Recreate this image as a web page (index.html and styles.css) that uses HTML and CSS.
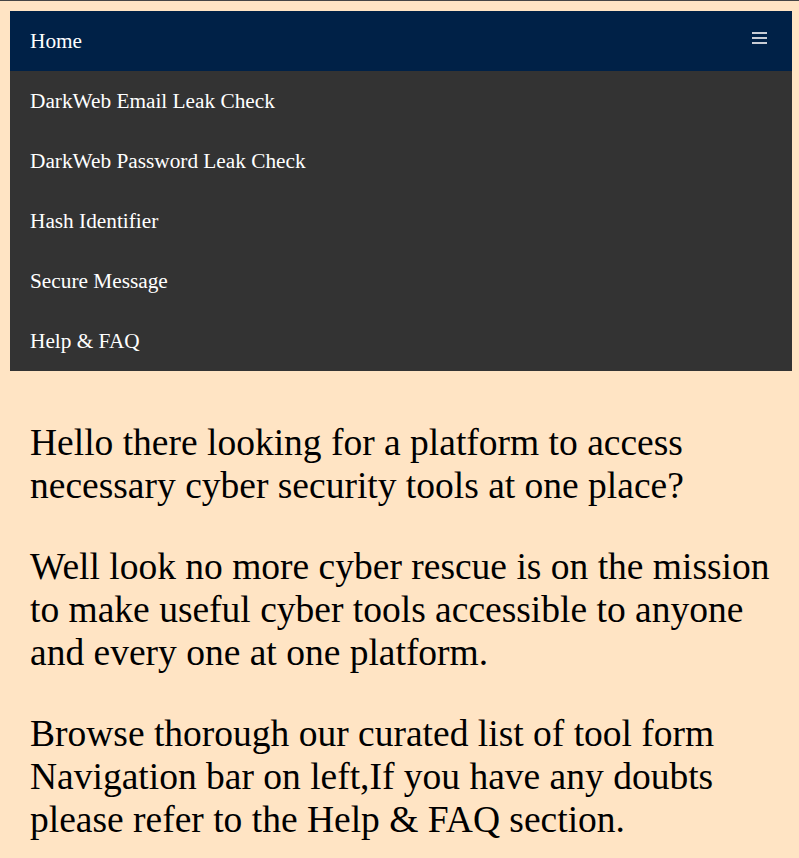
FILE: index.html
```html
<!DOCTYPE html>
<html lang="en">
<head>
<meta charset="utf-8">
<title>Cyber Rescue</title>
<link rel="stylesheet" href="styles.css">
</head>
<body>
<nav class="nav">
  <div class="nav-top">
    <a class="nav-link" href="#">Home</a>
    <span class="menu-icon" aria-hidden="true"><span></span><span></span><span></span></span>
  </div>
  <a class="nav-link nav-item" href="#">DarkWeb Email Leak Check</a>
  <a class="nav-link nav-item" href="#">DarkWeb Password Leak Check</a>
  <a class="nav-link nav-item" href="#">Hash Identifier</a>
  <a class="nav-link nav-item" href="#">Secure Message</a>
  <a class="nav-link nav-item" href="#">Help &amp; FAQ</a>
</nav>
<main class="content">
  <p>Hello there looking for a platform to access necessary cyber security tools at one place?</p>
  <p>Well look no more cyber rescue is on the mission to make useful cyber tools accessible to anyone and every one at one platform.</p>
  <p>Browse thorough our curated list of tool form Navigation bar on left,If you have any doubts please refer to the Help &amp; FAQ section.</p>
</main>
</body>
</html>
```
FILE: styles.css
```css
html {
  background: #ffe4c4;
  border-top: 1px solid #454545;
}
body {
  margin: 10px 7px 0 10px;
  font-family: "Liberation Serif", "Times New Roman", serif;
  background: #ffe4c4;
}
.nav {
  display: flex;
  flex-direction: column;
}
.nav-top {
  display: flex;
  align-items: center;
  justify-content: space-between;
  height: 60px;
  background: #002147;
  padding: 0 25px 0 20px;
}
.nav-link {
  color: #ffffff;
  text-decoration: none;
  font-size: 21.3px;
}
.nav-item {
  display: flex;
  align-items: center;
  height: 60px;
  padding: 0 20px;
  background: #333333;
}
.menu-icon {
  display: flex;
  flex-direction: column;
  gap: 3px;
  width: 15px;
  margin-top: -6px;
}
.menu-icon span {
  display: block;
  height: 2px;
  background: #c8ccd4;
}
.content {
  padding: 50px 14px 0 20px;
}
.content p {
  font-size: 37.5px;
  line-height: 43px;
  margin: 0 0 38px;
  color: #000;
}
```
